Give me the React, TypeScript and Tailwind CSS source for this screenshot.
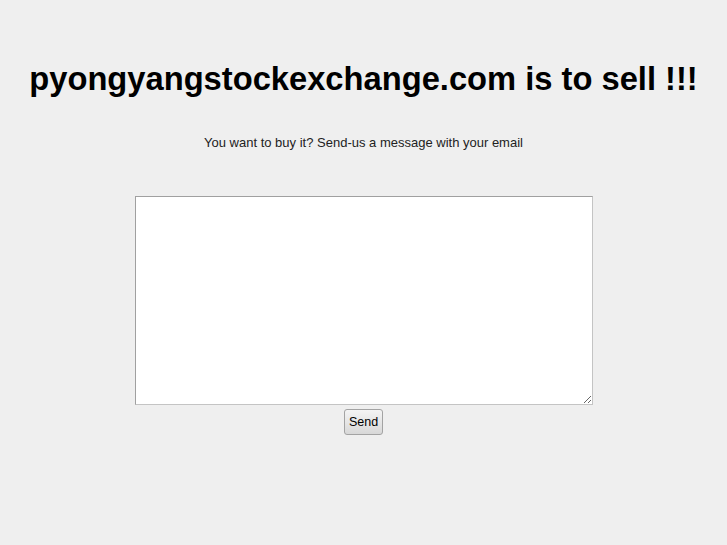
import React from "react";

export default function App() {
  return (
    <div className="min-h-[545px] w-full bg-[#efefef] text-center" style={{ fontFamily: '"Liberation Sans", Arial, sans-serif' }}>
      <div className="pt-[59px]">
        <h1 className="text-[32.7px] leading-[40px] font-bold text-black">pyongyangstockexchange.com is to sell !!!</h1>
      </div>
      <p className="mt-[36px] text-[13px] leading-[16px] text-[#222]">You want to buy it? Send-us a message with your email</p>
      <div className="mt-[45px] flex flex-col items-center">
        <textarea className="block w-[458px] h-[209px] bg-white border border-t-[#a0a0a0] border-l-[#a0a0a0] border-b-[#c4c4c4] border-r-[#c4c4c4] outline-none" />
        <button className="mt-[4px] h-[26px] w-[39px] rounded-[3px] border border-[#a3a3a3] bg-gradient-to-b from-[#f4f4f4] to-[#d8d8d8] text-[12.5px] text-black">Send</button>
      </div>
    </div>
  );
}
